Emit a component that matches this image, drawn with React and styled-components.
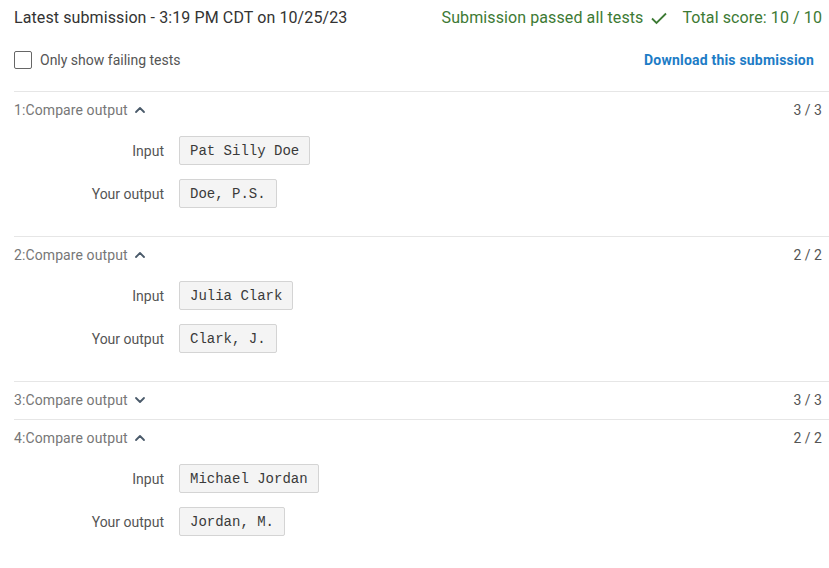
import React, { useState } from "react";
import styled, { createGlobalStyle } from "styled-components";

const GlobalStyle = createGlobalStyle`
  body {
    margin: 0;
    background: #fff;
    font-family: Roboto, "Liberation Sans", Arial, sans-serif;
  }
`;

const tests = [
  { id: 1, score: "3 / 3", open: true, input: "Pat Silly Doe", output: "Doe, P.S." },
  { id: 2, score: "2 / 2", open: true, input: "Julia Clark", output: "Clark, J." },
  { id: 3, score: "3 / 3", open: false, input: "", output: "" },
  { id: 4, score: "2 / 2", open: true, input: "Michael Jordan", output: "Jordan, M." },
];

const ChevronIcon = ({ up }) => (
  <svg width="12" height="12" viewBox="0 0 12 12" fill="none">
    <path
      d={up ? "M2 8 L6 4 L10 8" : "M2 4 L6 8 L10 4"}
      stroke="#4a5a6a"
      strokeWidth="1.8"
      strokeLinecap="round"
      strokeLinejoin="round"
    />
  </svg>
);

const CheckIcon = () => (
  <svg width="18" height="14" viewBox="0 0 18 14" fill="none">
    <path d="M2 7.5 L6.5 12 L16 2.5" stroke="#3d7a34" strokeWidth="1.8" />
  </svg>
);

const App = () => {
  const [onlyFailing, setOnlyFailing] = useState(false);
  const [openIds, setOpenIds] = useState(
    tests.filter((t) => t.open).map((t) => t.id)
  );

  const toggle = (id) => {
    setOpenIds((prev) =>
      prev.includes(id) ? prev.filter((i) => i !== id) : [...prev, id]
    );
  };

  return (
    <Page>
      <GlobalStyle />
      <Header>
        <Title>Latest submission - 3:19 PM CDT on 10/25/23</Title>
        <Status>
          <Passed>
            Submission passed all tests <CheckIcon />
          </Passed>
          <Total>Total score: 10 / 10</Total>
        </Status>
      </Header>
      <Toolbar>
        <CheckLabel>
          <Box
            type="checkbox"
            checked={onlyFailing}
            onChange={(e) => setOnlyFailing(e.target.checked)}
          />
          Only show failing tests
        </CheckLabel>
        <DownloadButton>Download this submission</DownloadButton>
      </Toolbar>
      {tests.map((test) => {
        const open = openIds.includes(test.id);
        return (
          <Section key={test.id}>
            <SectionHead onClick={() => toggle(test.id)}>
              <SectionTitle>
                {test.id}:Compare output <ChevronIcon up={open} />
              </SectionTitle>
              <Score>{test.score}</Score>
            </SectionHead>
            {open && (
              <SectionBody>
                <Row>
                  <RowLabel>Input</RowLabel>
                  <Code>{test.input}</Code>
                </Row>
                <Row>
                  <RowLabel>Your output</RowLabel>
                  <Code>{test.output}</Code>
                </Row>
              </SectionBody>
            )}
          </Section>
        );
      })}
    </Page>
  );
};

export default App;

const Page = styled.div`
  padding: 0 7px 0 14px;
  width: 829px;
  box-sizing: border-box;
`;

const Header = styled.div`
  display: flex;
  justify-content: space-between;
  align-items: center;
  height: 35px;
`;

const Title = styled.div`
  font-size: 16px;
  letter-spacing: 0.1px;
  color: #333;
`;

const Status = styled.div`
  display: flex;
  align-items: center;
  gap: 14px;
  font-size: 16px;
  letter-spacing: 0.1px;
  color: #3d7a34;
`;

const Passed = styled.span`
  display: flex;
  align-items: center;
  gap: 7px;
`;

const Total = styled.span``;

const Toolbar = styled.div`
  display: flex;
  justify-content: space-between;
  align-items: center;
  height: 50px;
  margin-right: -7px;
  padding-bottom: 6px;
  border-bottom: 1px solid #e6e6e6;
`;

const CheckLabel = styled.label`
  display: flex;
  align-items: center;
  gap: 8px;
  font-size: 14px;
  color: #555;
`;

const Box = styled.input`
  appearance: none;
  margin: 0;
  width: 18px;
  height: 18px;
  border: 1px solid #666;
  border-radius: 2px;
  box-sizing: border-box;
  background: #fff;
`;

const DownloadButton = styled.button`
  border: none;
  background: none;
  padding: 0 15px 0 0;
  font-family: Roboto, "Liberation Sans", Arial, sans-serif;
  font-weight: bold;
  font-size: 14px;
  letter-spacing: 0.2px;
  color: #1d7cc6;
  cursor: pointer;
`;

const Section = styled.div`
  border-bottom: 1px solid #e6e6e6;
  margin-right: -7px;
  padding-right: 7px;
  &:last-child {
    border-bottom: none;
  }
`;

const SectionHead = styled.div`
  display: flex;
  justify-content: space-between;
  align-items: center;
  height: 37px;
  padding-bottom: 1px;
  box-sizing: border-box;
  cursor: pointer;
`;

const SectionTitle = styled.div`
  display: flex;
  align-items: center;
  gap: 6px;
  font-size: 14px;
  letter-spacing: 0.1px;
  color: #777;
`;

const Score = styled.div`
  font-size: 14px;
  color: #555;
`;

const SectionBody = styled.div`
  display: flex;
  flex-direction: column;
  gap: 14px;
  padding: 7px 0 28px;
`;

const Row = styled.div`
  display: flex;
  align-items: center;
  gap: 15px;
`;

const RowLabel = styled.div`
  width: 150px;
  text-align: right;
  font-size: 14px;
  color: #555;
`;

const Code = styled.div`
  font-family: "Liberation Mono", "Courier New", monospace;
  font-size: 14px;
  color: #3a3a3a;
  background: #f4f4f4;
  border: 1px solid #d4d4d4;
  border-radius: 2px;
  padding: 6px 10px 4px;
  line-height: 17px;
`;
